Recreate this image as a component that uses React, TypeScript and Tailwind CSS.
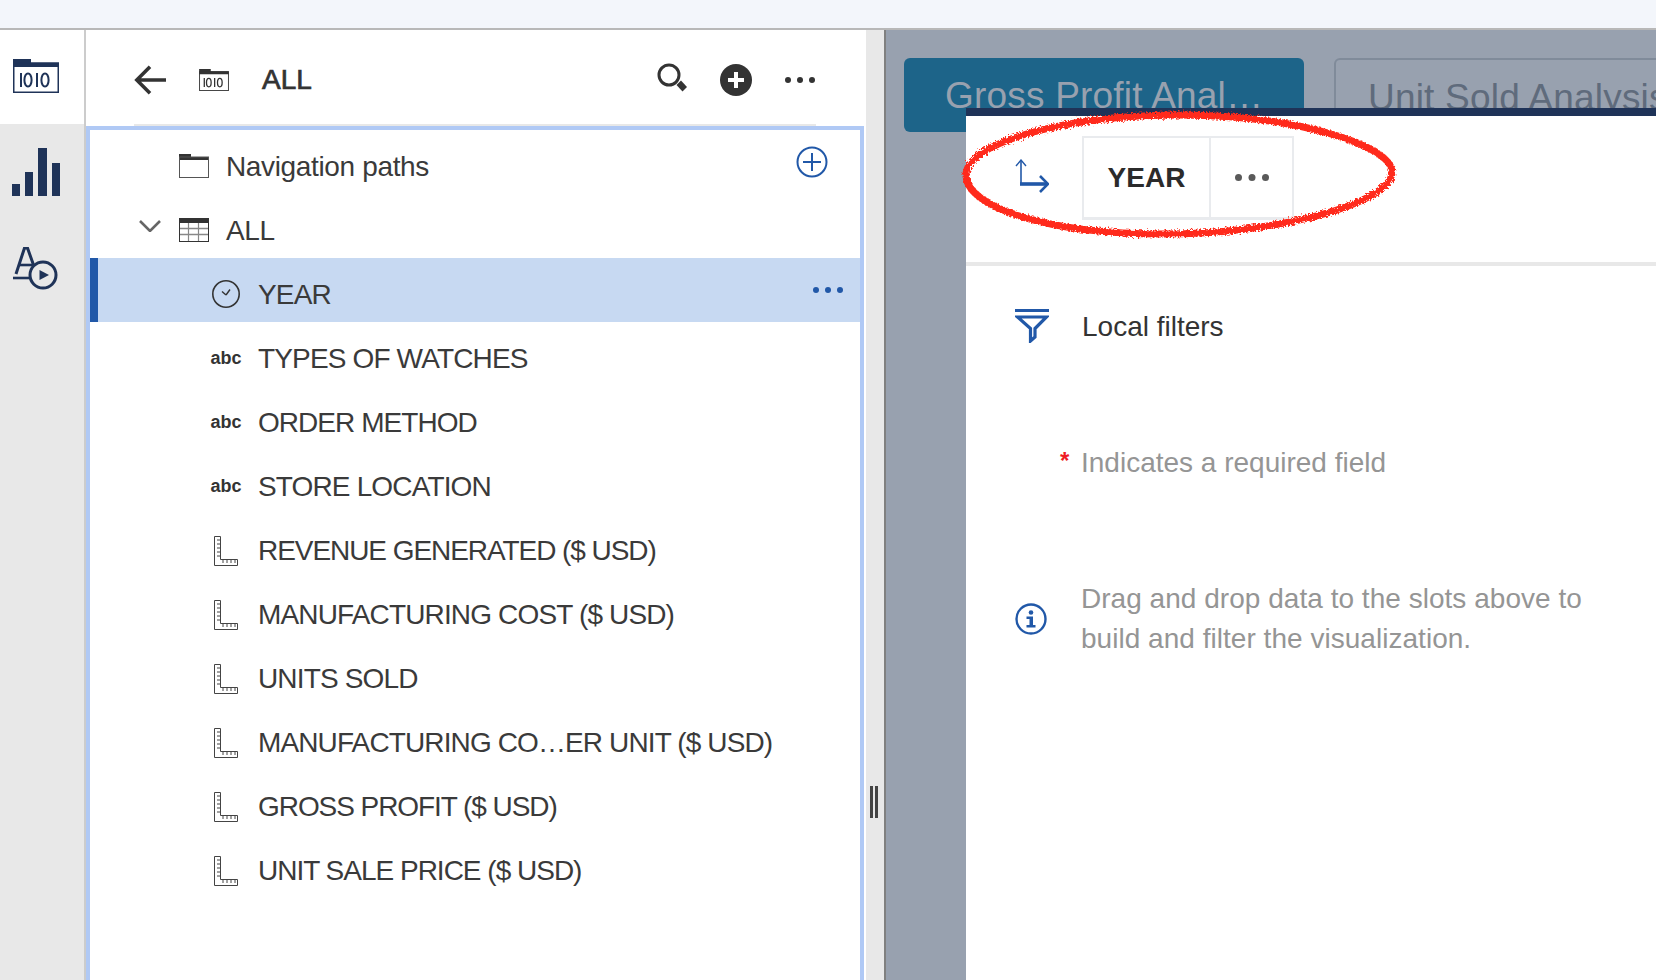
import React from "react";

const NAVY = "#1f3358";
const BLUE = "#2158a8";

function BinaryFolder({ w, h, c, sw }: { w: number; h: number; c: string; sw: number }) {
  return (
    <svg width={w} height={h} viewBox="0 0 46 34" fill="none">
      <path d="M0 0H18V4H46V8H0Z" fill={c} />
      <rect x={sw / 2} y={4} width={46 - sw} height={30 - sw / 2} stroke={c} strokeWidth={sw} />
      <g stroke={c} strokeWidth="2">
        <path d="M8 14V28" />
        <ellipse cx="15" cy="21" rx="3.6" ry="6.6" />
        <path d="M24 14V28" />
        <ellipse cx="32" cy="21" rx="3.6" ry="6.6" />
      </g>
    </svg>
  );
}

function FolderIcon() {
  return (
    <svg width="30" height="24" viewBox="0 0 30 24" fill="none">
      <path d="M0 0H12V3H30V6H0Z" fill="#333" />
      <rect x="0.5" y="3" width="29" height="20.5" stroke="#555" />
    </svg>
  );
}

function TableIcon() {
  return (
    <svg width="30" height="24" viewBox="0 0 30 24" fill="none">
      <rect x="0" y="0" width="30" height="5" fill="#333" />
      <rect x="0.5" y="0.5" width="29" height="23" stroke="#333" />
      <path d="M1 10.5H29M1 16.5H29" stroke="#888" strokeWidth="1.5" />
      <path d="M9.5 5V23M19.5 5V23" stroke="#888" strokeWidth="1.2" />
    </svg>
  );
}

function ClockIcon() {
  return (
    <svg width="30" height="30" viewBox="0 0 30 30" fill="none" stroke="#333">
      <circle cx="15" cy="15" r="13.2" strokeWidth="1.6" />
      <path d="M15 16L11 12.5M15 16L19 10.5" strokeWidth="1.4" />
    </svg>
  );
}

function RulerIcon() {
  return (
    <svg className="mt-[1px]" width="24" height="30" viewBox="0 0 24 30" fill="none" stroke="#444" strokeWidth="1">
      <path d="M0.5 0.5H6.5V23.5H23.5V29.5H0.5Z" />
      <path d="M3 4H6M3 8H6M3 12H6M3 16H6M3 20H6M9 27V24M13 27V24M17 27V24M21 27V24" />
    </svg>
  );
}

function Abc() {
  return <span className="text-[18px] font-bold leading-none tracking-normal text-[#333]">abc</span>;
}

function Dots({ c, r = 3, gap = 12 }: { c: string; r?: number; gap?: number }) {
  return (
    <svg className="block" width={gap * 2 + r * 2} height={r * 2} viewBox={`0 0 ${gap * 2 + r * 2} ${r * 2}`}>
      <circle cx={r} cy={r} r={r} fill={c} />
      <circle cx={r + gap} cy={r} r={r} fill={c} />
      <circle cx={r + gap * 2} cy={r} r={r} fill={c} />
    </svg>
  );
}

const fields: { label: string; kind: "abc" | "ruler"; track: string }[] = [
  { label: "TYPES OF WATCHES", kind: "abc", track: "tracking-[-0.85px]" },
  { label: "ORDER METHOD", kind: "abc", track: "tracking-[-0.95px]" },
  { label: "STORE LOCATION", kind: "abc", track: "tracking-[-0.85px]" },
  { label: "REVENUE GENERATED ($ USD)", kind: "ruler", track: "tracking-[-1.06px]" },
  { label: "MANUFACTURING COST ($ USD)", kind: "ruler", track: "tracking-[-0.85px]" },
  { label: "UNITS SOLD", kind: "ruler", track: "tracking-[-0.85px]" },
  { label: "MANUFACTURING CO…ER UNIT ($ USD)", kind: "ruler", track: "tracking-[-0.88px]" },
  { label: "GROSS PROFIT ($ USD)", kind: "ruler", track: "tracking-[-1.06px]" },
  { label: "UNIT SALE PRICE ($ USD)", kind: "ruler", track: "tracking-[-1px]" },
];

function Rail() {
  return (
    <div className="w-[86px] shrink-0 flex flex-col bg-[#e8e8e8] border-r-2 border-[#cccccc]">
      <div className="h-[94px] bg-white flex pl-[13px] pt-[29px]">
        <BinaryFolder w={46} h={34} c={NAVY} sw={1.5} />
      </div>
      <div className="pl-[12px] pt-[24px]">
        <svg className="block" width="48" height="48" viewBox="0 0 48 48" fill={NAVY}>
          <rect x="0" y="36" width="8" height="12" />
          <rect x="13" y="24" width="8" height="24" />
          <rect x="26" y="0" width="9" height="48" />
          <rect x="40" y="15" width="8" height="33" />
        </svg>
      </div>
      <div className="pl-[13px] pt-[51px]">
        <svg className="block" width="46" height="44" viewBox="0 0 46 44" fill="none" stroke={NAVY}>
          <path d="M3 27L11.5 1H14.5L23 25" strokeWidth="3" />
          <path d="M7 18H19" strokeWidth="2.6" />
          <path d="M0 31H20" strokeWidth="2.6" />
          <circle cx="30" cy="28" r="13" strokeWidth="3" fill="#e8e8e8" />
          <path d="M26.5 23L36 28L26.5 33Z" fill={NAVY} stroke="none" />
        </svg>
      </div>
    </div>
  );
}

function Row({ indent, icon, label, chevron }: { indent: number; icon: React.ReactNode; label: string; chevron?: boolean }) {
  return (
    <div className="h-[64px] flex items-center pt-[8px] text-[28px] text-[#3a3a3a] tracking-[-0.35px]">
      {chevron && (
        <svg className="ml-[49px] mb-[8px]" width="22" height="12" viewBox="0 0 22 12" fill="none" stroke="#666" strokeWidth="2.6">
          <path d="M1 1L11 11L21 1" />
        </svg>
      )}
      <div style={{ marginLeft: indent }} className="w-[47px] shrink-0 flex items-center">
        {icon}
      </div>
      <span className="pt-[1px]">{label}</span>
    </div>
  );
}

function FieldRow({ icon, label, track }: { icon: React.ReactNode; label: string; track: string }) {
  return (
    <div className={`h-[64px] flex items-center pt-[8px] text-[28px] text-[#3a3a3a] ${track}`}>
      <div className="ml-[112px] w-[48px] mr-[8px] shrink-0 flex justify-center items-center">{icon}</div>
      <span className="pt-[1px]">{label}</span>
    </div>
  );
}

function DataPanel() {
  return (
    <div className="w-[780px] shrink-0 bg-white flex flex-col">
      <div className="h-[94px] flex items-center pt-[6px] pl-[48px] pr-[51px]">
        <svg width="32" height="32" viewBox="0 0 34 32" fill="none" stroke="#333" strokeWidth="3.8">
          <path d="M34 16H3M17 2L3 16L17 30" />
        </svg>
        <div className="ml-[33px] mr-[33px]">
          <BinaryFolder w={30} h={22} c="#333" sw={1.4} />
        </div>
        <span className="text-[28px] text-[#333] tracking-[0px] [-webkit-text-stroke:0.7px_#333]">ALL</span>
        <div className="ml-auto flex items-center">
          <svg className="mb-[2px]" width="30" height="32" viewBox="0 0 30 32" fill="none">
            <circle cx="12" cy="12" r="10" stroke="#333" strokeWidth="3" />
            <path d="M19.5 22L24 17.5L30 24L25.5 28.5Z" fill="#333" />
          </svg>
          <svg className="ml-[33px]" width="32" height="32" viewBox="0 0 32 32">
            <circle cx="16" cy="16" r="16" fill="#333" />
            <path d="M16 8V24M8 16H24" stroke="#fff" strokeWidth="4" />
          </svg>
          <div className="ml-[33px]">
            <Dots c="#333" />
          </div>
        </div>
      </div>
      <div className="h-[2px] ml-[48px] w-[682px] bg-[#e8e8e8]" />
      <div className="flex-1 mr-[2px] border-4 border-b-0 border-[#b0c9f5] overflow-hidden">
        <div className="relative">
          <Row indent={89} icon={<FolderIcon />} label="Navigation paths" />
          <svg className="absolute right-[32px] top-[16px]" width="32" height="32" viewBox="0 0 32 32" fill="none" stroke={BLUE} strokeWidth="2">
            <circle cx="16" cy="16" r="14.5" />
            <path d="M16 7V25M7 16H25" />
          </svg>
        </div>
        <Row indent={18} chevron icon={<TableIcon />} label="ALL" />
        <div className="h-[64px] flex items-center bg-[#c7d9f2] border-l-[8px] border-[#2158a8] text-[28px] text-[#3a3a3a] tracking-[-0.85px]">
          <div className="ml-[104px] w-[48px] mr-[8px] shrink-0 flex justify-center pt-[8px]">
            <ClockIcon />
          </div>
          <span className="pt-[9px]">YEAR</span>
          <div className="ml-auto mr-[17px]">
            <Dots c={BLUE} />
          </div>
        </div>
        {fields.map((f) => (
          <FieldRow key={f.label} label={f.label} track={f.track} icon={f.kind === "abc" ? <Abc /> : <RulerIcon />} />
        ))}
      </div>
    </div>
  );
}

function Splitter() {
  return (
    <div className="w-[20px] shrink-0 bg-[#e8e8e8] border-r-2 border-[#808080] flex items-start pt-[756px] pl-[4px] gap-[2px]">
      <div className="w-[3px] h-[32px] bg-[#444]" />
      <div className="w-[3px] h-[32px] bg-[#444]" />
    </div>
  );
}

function Modal() {
  return (
    <div className="absolute left-[80px] top-[78px] right-0 bottom-0 bg-white border-t-[8px] border-[#1f3358] text-[28px]">
      <div className="h-[146px] flex items-center pb-[22px] pl-[49px]">
        <svg className="mb-[4px]" width="34" height="34" viewBox="0 0 34 34" fill="none" stroke={BLUE}>
          <path d="M6 1V25" strokeWidth="1.6" />
          <path d="M1 7L6 1L11 7" strokeWidth="1.4" />
          <path d="M5 25H32" strokeWidth="3.6" />
          <path d="M25 17L33 25L25 33" strokeWidth="2.6" />
        </svg>
        <div className="ml-[33px] h-[84px] flex border-2 border-b-[3px] border-[#e9ebee]">
          <div className="w-[127px] flex items-center justify-center font-bold text-[#2b2b2b] border-r-2 border-[#e9ebee]">YEAR</div>
          <div className="w-[81px] flex items-center justify-center">
            <Dots c="#5a5a5a" r={3.5} gap={13.5} />
          </div>
        </div>
      </div>
      <div className="h-[4px] bg-[#e8e8e8]" />
      <div className="flex items-center pl-[49px] pt-[32px] h-[88px]">
        <svg width="34" height="34" viewBox="0 0 34 34" fill="none" stroke={BLUE}>
          <path d="M0 1.5H34" strokeWidth="3" />
          <path d="M2.5 8H31.5L20 19.5V28L15.5 32V19.5Z" strokeWidth="3.2" />
        </svg>
        <span className="ml-[33px] pt-[1px] text-[#333] leading-none">Local filters</span>
      </div>
      <div className="flex pl-[94px] mt-[89px] text-[#959595] leading-[40px]">
        <span className="w-[22px] pt-[3px] text-[#ee1c25] font-bold text-[24px] leading-[30px]">*</span>
        <span className="-ml-[1px]">Indicates a required field</span>
      </div>
      <div className="flex items-center pl-[49px] mt-[96px]">
        <svg width="32" height="32" viewBox="0 0 32 32" fill="none">
          <circle cx="16" cy="16" r="14.5" stroke={BLUE} strokeWidth="2.4" />
          <circle cx="16" cy="9.5" r="2.3" fill={BLUE} />
          <path d="M11.5 13.5H18V22H20.5V24.5H11.5V22H14.5V16H11.5Z" fill={BLUE} />
        </svg>
        <p className="ml-[34px] text-[#959595] leading-[40px] tracking-[0.03px]">
          Drag and drop data to the slots above to
          <br />
          build and filter the visualization.
        </p>
      </div>
    </div>
  );
}

function RedEllipse() {
  return (
    <svg className="absolute left-[69px] top-[73px] pointer-events-none" width="460" height="150" viewBox="0 0 460 150" fill="none">
      <defs>
        <filter id="rough" x="-5%" y="-10%" width="110%" height="120%">
          <feTurbulence type="fractalNoise" baseFrequency="0.6" numOctaves="2" seed="4" />
          <feDisplacementMap in="SourceGraphic" scale="6" />
        </filter>
      </defs>
      <path
        d="M11 72C11 40 110 12 225 12C340 12 437 42 437 69C437 100 325 131 208 131C95 131 11 105 11 72Z"
        stroke="#ff2a1a"
        strokeWidth="7"
        filter="url(#rough)"
      />
    </svg>
  );
}

function Workspace() {
  return (
    <div className="relative flex-1 min-w-0 bg-[#98a1af] overflow-hidden">
      <div className="flex items-start gap-[30px] pl-[18px] pt-[28px] text-[37px] leading-[76px] tracking-[0.2px]">
        <div className="w-[400px] h-[74px] shrink-0 rounded-[6px] bg-[#1d6489] text-[#98a1af] pl-[41px] whitespace-nowrap">Gross Profit Anal…</div>
        <div className="w-[400px] h-[74px] shrink-0 rounded-[6px] border-2 border-[#808b9a] text-[#5f6b7c] pl-[32px] whitespace-nowrap">Unit Sold Analysis</div>
      </div>
      <Modal />
      <RedEllipse />
    </div>
  );
}

export default function App() {
  return (
    <div className="w-[1656px] h-[980px] overflow-hidden flex flex-col bg-white font-['Liberation_Sans',Arial,sans-serif]">
      <div className="h-[30px] shrink-0 bg-[#f3f6fb] border-b-2 border-[#b8b8b8]" />
      <div className="flex-1 min-h-0 flex">
        <Rail />
        <DataPanel />
        <Splitter />
        <Workspace />
      </div>
    </div>
  );
}
